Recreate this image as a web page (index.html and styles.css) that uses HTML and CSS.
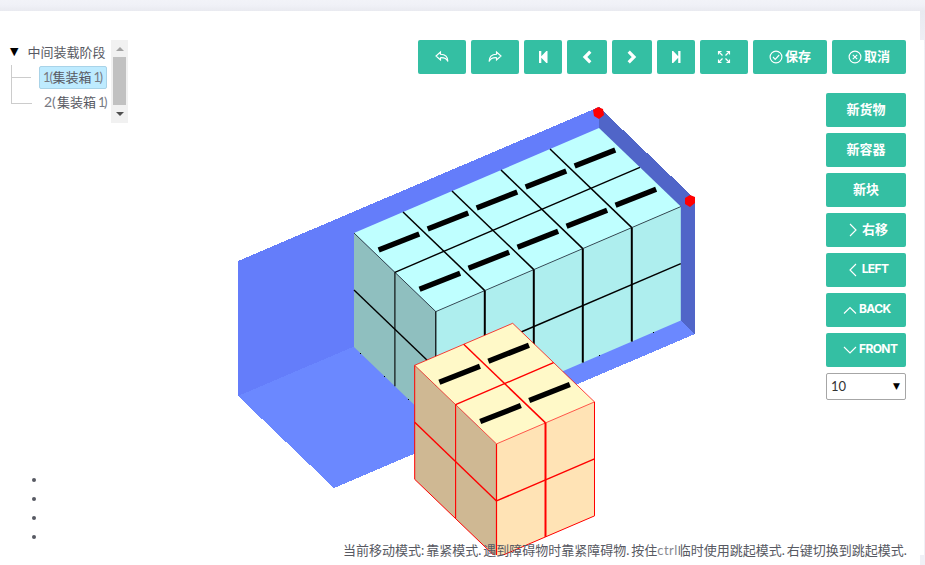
FILE: index.html
```
<!DOCTYPE html>
<html lang="zh-CN">
<head>
<meta charset="utf-8">
<title>装载编辑</title>
<link rel="stylesheet" href="styles.css">
</head>
<body>
<div class="panel">
<main class="stage">
  <svg class="scene" width="924" height="515" viewBox="0 40 924 515">
    <g id="container" shape-rendering="crispEdges">
      <path fill="#6b88ff" d="M238 396L599 242L695 334L334 488Z"/>
      <path fill="#647dfa" d="M238 261L599 107V242L238 396Z"/>
      <path fill="#5065c8" d="M599 107L695 199V334L599 242Z"/>
    </g>
    <path fill="red" d="M593 110l5-3 5 2 1 6-5 4-5-3zM685 198l5-3 5 2v6l-5 4-5-3z"/>
    <g id="cargo"></g>
    <path d="M360 353h1v1h-1zM384 376h1v1h-1zM408 399h1v1h-1zM599 355h1v1h-1zM653 332h1v1h-1z"/>
  </svg>
  <div class="top">
    <div class="tree">
      <div class="nodes">
        <div class="root"><span class="caret">▼</span>中间装载阶段</div>
        <div class="child"><span class="label selected"><b>1(</b>集装箱<b class="tail">1)</b></span></div>
        <div class="child last"><span class="label"><b>2(</b>集装箱<b class="tail">1)</b></span></div>
      </div>
      <div class="scroll"><i class="up"></i><i class="thumb"></i><i class="down"></i></div>
    </div>
    <div class="toolbar">
      <button class="btn w48"><svg width="14" height="14" viewBox="0 0 14 14"><path d="M5.500 2L1 6l4.500 4V7.700C9 7.500 11.500 8.300 12.900 11.500C12.900 7 10 4.300 5.500 4.200Z"/></svg></button>
      <button class="btn w48"><svg width="14" height="14" viewBox="0 0 14 14"><path d="M8.500 2L13 6L8.500 10V7.700C5 7.500 2.500 8.300 1.100 11.500C1.100 7 4 4.300 8.500 4.200Z"/></svg></button>
      <button class="btn w38"><svg class="solid" width="14" height="14" viewBox="0 0 14 14"><path d="M3 1h2.300v5.200l5-5.200h1.200v12h-1.200l-5-5.200V13H3z"/></svg></button>
      <button class="btn w40"><svg class="bold" width="14" height="14" viewBox="0 0 14 14"><path d="M10.300 1.700L5 7l5.300 5.300"/></svg></button>
      <button class="btn w40"><svg class="bold" width="14" height="14" viewBox="0 0 14 14"><path d="M3.700 1.700L9 7l-5.300 5.300"/></svg></button>
      <button class="btn w38"><svg class="solid" width="14" height="14" viewBox="0 0 14 14"><path d="M11.500 1H9.200v5.200L4.200 1H3v12h1.200l5-5.200V13h2.300z"/></svg></button>
      <button class="btn w48"><svg width="14" height="14" viewBox="0 0 14 14"><path d="M1.500 4.500V1.500H4.500M1.500 1.500l4 4M9.500 1.500h3V4.500M12.500 1.500l-4 4M1.500 9.500v3H4.500M1.500 12.500l4-4M9.500 12.500h3V9.500M12.500 12.500l-4-4"/></svg></button>
      <button class="btn w74"><svg width="14" height="14" viewBox="0 0 14 14"><circle cx="7" cy="7" r="5.900"/><path d="M4 7l2.200 2.300L10.200 5"/></svg><span>保存</span></button>
      <button class="btn w74"><svg width="14" height="14" viewBox="0 0 14 14"><circle cx="7" cy="7" r="5.900"/><path d="M4.800 4.800l4.400 4.400M9.200 4.800L4.800 9.200"/></svg><span>取消</span></button>
    </div>
  </div>
  <div class="side">
    <button class="btn"><span>新货物</span></button>
    <button class="btn"><span>新容器</span></button>
    <button class="btn"><span>新块</span></button>
    <button class="btn move"><svg width="14" height="14" viewBox="0 0 14 14"><path d="M4 1L10 7L4 13"/></svg><span>右移</span></button>
    <button class="btn move"><svg width="14" height="14" viewBox="0 0 14 14"><path d="M10 1L4 7l6 6"/></svg><span class="en">LEFT</span></button>
    <button class="btn start"><svg width="14" height="14" viewBox="0 0 14 14"><path d="M1 10.500L7 4.500l6 6"/></svg><span class="en">BACK</span></button>
    <button class="btn start"><svg width="14" height="14" viewBox="0 0 14 14"><path d="M1 4L7 10l6-6"/></svg><span class="en">FRONT</span></button>
    <div class="select"><span>10</span><span class="arrow">▼</span></div>
  </div>
  <ul class="dots"><li></li><li></li><li></li><li></li></ul>
  <div class="status"><span>当前移动模式: 靠紧模式. 遇到障碍物时靠紧障碍物. 按住<span class="key">ctrl</span>临时使用跳起模式. 右键切换到跳起模式.</span></div>
</main>
</div>
<script src="scene.js"></script>
</body>
</html>
```
FILE: scene.js
```
// Draws a block of boxes in the oblique projection of the container.
const U = [49, -21], V = [40.9, 39.3], H = 57;

function block(ox, oy, cols, c) {
  const pt = (u, v, h) => [ox + u * U[0] + v * V[0], oy + u * U[1] + v * V[1] + h * H];
  const face = (pts, fill) => `<polygon points="${pts.map(p => p.join()).join(' ')}" fill="${fill}"/>`;
  const line = (a, b, w, stroke, o = 1) =>
    `<line x1="${a[0]}" y1="${a[1]}" x2="${b[0]}" y2="${b[1]}" stroke="${stroke}" stroke-width="${w}" stroke-opacity="${o}"/>`;
  const n = cols;
  let s = face([pt(0,0,0), pt(n,0,0), pt(n,2,0), pt(0,2,0)], c.top)
    + face([pt(0,0,0), pt(0,2,0), pt(0,2,2), pt(0,0,2)], c.left)
    + face([pt(0,2,0), pt(n,2,0), pt(n,2,2), pt(0,2,2)], c.front);
  for (let i = 1; i < n; i++) {
    s += line(pt(i,0,0), pt(i,2,0), 1.5, c.line);
    s += line(pt(i,2,0), pt(i,2,2), 2, c.line);
  }
  s += line(pt(0,1,0), pt(n,1,0), 1.4, c.line)
    + line(pt(0,1,0), pt(0,1,2), 1.1, c.line)
    + line(pt(0,0,1), pt(0,2,1), 1.4, c.line)
    + line(pt(0,2,1), pt(n,2,1), 1.5, c.line)
    + line(pt(0,2,0), pt(0,2,2), 1.2, c.line)
    + line(pt(0,0,0), pt(0,2,0), 1, c.line, .65)
    + line(pt(0,2,0), pt(n,2,0), 1, c.line, .65);
  if (c.outline) {
    s += line(pt(0,0,0), pt(n,0,0), 1, c.line, .75)
      + line(pt(n,0,0), pt(n,2,0), 1, c.line, .75)
      + line(pt(0,0,0), pt(0,0,2), 1, c.line)
      + line(pt(0,0,2), pt(0,2,2), 1, c.line)
      + line(pt(0,2,2), pt(n,2,2), 1, c.line)
      + line(pt(n,2,0), pt(n,2,2), 1, c.line);
  }
  for (let i = 0; i < n; i++)
    for (let j = 0; j < 2; j++) {
      const [x, y] = pt(i + .5, j + .5, 0);
      s += line([x - 20.3, y + 7.8], [x + 20.3, y - 8.2], 5.4, '#000');
    }
  return s;
}

document.getElementById('cargo').innerHTML =
  block(354, 233, 5, { top: '#bfffff', left: '#8fbfbf', front: '#aeeeee', line: '#000' }) +
  block(414.7, 365.3, 2, { top: '#fff9c8', left: '#cfb893', front: '#ffe3b5', line: '#f00', outline: true });
```
FILE: styles.css
```
* { box-sizing: border-box; }
body {
  margin: 0;
  width: 925px;
  height: 565px;
  overflow: hidden;
  padding-top: 11px;
  background: linear-gradient(#f2f3f8 0, #f0f1f7 5px, #e9eaf0 11px, #f0f0f6 50px);
  font-family: Lato, "Noto Sans CJK SC", sans-serif;
  font-size: 13px;
  color: #575962;
}
.panel {
  width: 920px;
  height: 554px;
  padding-top: 29px;
  background: #fff;
}
.stage {
  position: relative;
  display: flex;
  flex-direction: column;
  width: 924px;
  height: 515px;
  background: #fff;
}
.scene { position: absolute; top: 0; left: 0; }
.top, .side, .dots, .status { position: relative; }
.top {
  display: flex;
  justify-content: space-between;
  height: 34px;
  padding-right: 18px;
}
.tree { display: flex; height: 83px; }
.nodes { width: 111px; line-height: 24px; white-space: nowrap; }
.root { display: flex; height: 25px; padding-left: 10px; }
.caret {
  width: 17.500px;
  color: #000;
  font: 11px/24px "DejaVu Sans", sans-serif;
}
.child {
  display: flex;
  align-items: center;
  height: 25px;
  margin-left: 11px;
  border-left: 1px solid #ccc;
}
.child::before { content: ""; flex: none; width: 19px; height: 1px; background: #ccc; }
.child.last { border: 0; }
.child.last::before {
  width: 20px;
  height: 13px;
  margin-bottom: 12px;
  background: none;
  border-left: 1px solid #ccc;
  border-bottom: 1px solid #ccc;
}
.label {
  display: flex;
  flex: none;
  height: 23px;
  margin-left: 8px;
  padding: 0 3px;
  border: 1px solid transparent;
  border-radius: 2px;
  line-height: 20px;
}
.label b { width: 13px; font-weight: 400; font-size: 14px; color: #777983; }
.label .tail { width: 10px; margin-left: 2px; font-size: 13px; letter-spacing: -1.500px; }
.selected { width: 68px; background: #beebff; border-color: #a9d3e8; }
.selected b { width: 10px; font-size: 13px; letter-spacing: -1px; }
.scroll {
  display: flex;
  flex-direction: column;
  align-items: center;
  justify-content: space-between;
  width: 17px;
  height: 83px;
  padding: 7px 0;
  background: #f1f1f1;
}
.up, .down { border: 4px solid transparent; border-top: 0; border-bottom: 4px solid #a3a3a3; }
.down { border-bottom: 0; border-top: 4px solid #505050; }
.thumb { width: 13px; height: 48px; margin-top: -2px; background: #c1c1c1; }
.toolbar { display: flex; gap: 5px; }
.btn {
  display: flex;
  align-items: center;
  justify-content: center;
  gap: 2px;
  height: 34px;
  padding: 0;
  border: 0;
  border-radius: 2px;
  background: #34bfa3;
  color: #fff;
  font: 700 13px/18px Lato, "Noto Sans CJK SC", sans-serif;
}
.btn span { padding-bottom: 2px; }
.btn svg { fill: none; stroke: #fff; stroke-width: 1.150; }
.btn .solid { fill: #fff; stroke: none; }
.btn .bold { stroke-width: 3.200; }
.w38 { width: 38px; }
.w40 { width: 40px; }
.w48 { width: 48px; }
.w74 { width: 74px; }
.side {
  display: flex;
  flex-direction: column;
  gap: 6px;
  width: 80px;
  margin: 19px 18px 0 auto;
}
.move { padding-left: 2px; gap: 2px; }
.start { justify-content: flex-start; padding-left: 17px; }
.btn .en { font: 700 12px/18px Inter, sans-serif; letter-spacing: -.6px; }
.select {
  display: flex;
  align-items: center;
  justify-content: space-between;
  height: 27px;
  padding: 0 5px 2px 4px;
  border: 1px solid #a6a6a6;
  border-radius: 2px;
  background: #fff;
  color: #333;
}
.arrow { color: #000; font: 9px/12px "DejaVu Sans", sans-serif; }
.dots {
  margin: 70px 0 0 7px;
  padding-left: 40px;
  line-height: 19px;
}
.dots li { height: 19px; }
.status {
  margin: -5px 18px 0 0;
  padding-left: 343px;
  line-height: 19px;
  white-space: nowrap;
  word-spacing: -1.400px;
}
.key { color: #888a91; letter-spacing: .5px; }
```
